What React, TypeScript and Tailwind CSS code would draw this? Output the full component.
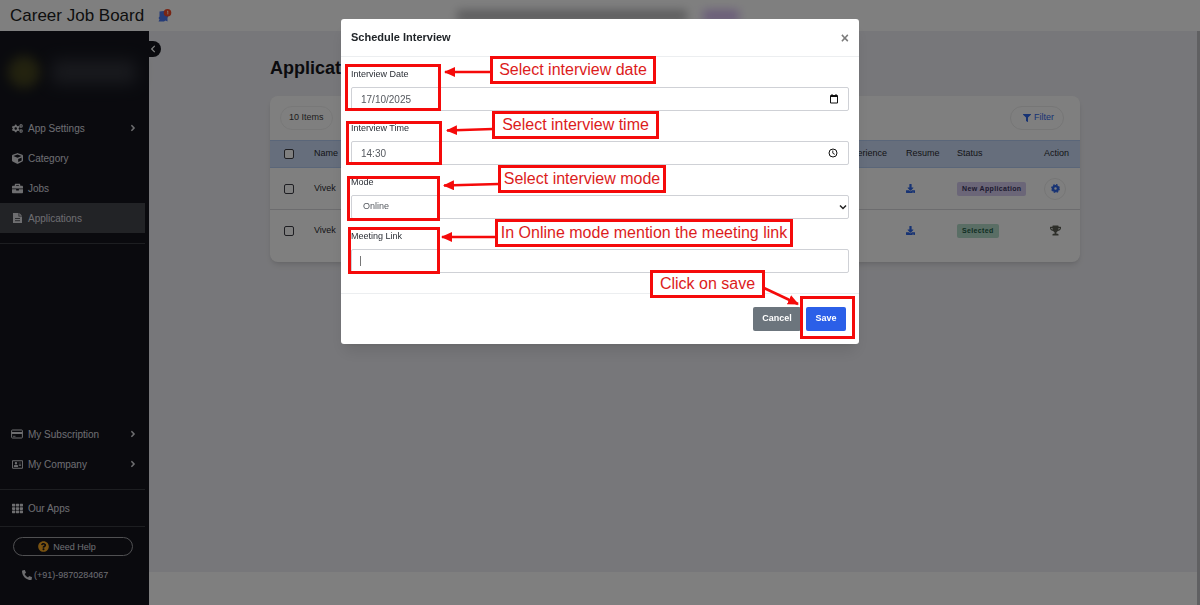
import { useState } from "react";
import type { ReactNode } from "react";
import {
  FaAngleRight,
  FaBriefcase,
  FaChevronLeft,
  FaCogs,
  FaCube,
  FaDownload,
  FaFilter,
  FaPhoneAlt,
  FaQuestionCircle,
  FaRegAddressCard,
  FaTh,
  FaTrophy,
} from "react-icons/fa";

interface NavItemProps {
  icon: ReactNode;
  label: string;
  active?: boolean;
  expandable?: boolean;
}

function NavItem({ icon, label, active, expandable }: NavItemProps) {
  return (
    <a
      href="#"
      className={`mr-1 flex h-[30px] items-center gap-[5px] pl-[11px] pr-[7px] text-[10px] ${
        active ? "bg-[#45464c]" : ""
      }`}
    >
      <span className="flex w-3 justify-center text-[11px]">{icon}</span>
      <span className="flex-1">{label}</span>
      {expandable && <FaAngleRight className="text-[10px]" />}
    </a>
  );
}

function DocumentIcon() {
  return (
    <svg viewBox="0 0 11 12" className="h-3 w-[11px]">
      <path d="M1 1h5.500v3.500H10V11H1z M7.300 1 10 3.700H7.300z" fill="currentColor" />
      <path d="M3 6.500h5 M3 8.700h5" stroke="#45464c" strokeWidth=".9" />
    </svg>
  );
}

function CardIcon() {
  return (
    <svg viewBox="0 0 12 10" className="h-[10px] w-3">
      <rect x=".6" y="1" width="10.800" height="8" rx=".8" fill="none" stroke="currentColor" />
      <path d="M.6 3h10.800v2H.6z" fill="currentColor" />
      <path d="M2 7.300h2.500" stroke="currentColor" strokeWidth=".8" />
    </svg>
  );
}

function Sidebar() {
  return (
    <aside className="relative flex w-[149px] shrink-0 flex-col bg-[#14151d] pb-[23px] text-[#dcdce0]">
      <button
        type="button"
        aria-label="Collapse sidebar"
        className="absolute left-full top-[10px] flex h-4 w-3 items-center justify-center rounded-r-lg bg-[#14151d] pr-1 text-[8px] text-white"
      >
        <FaChevronLeft />
      </button>
      <div className="flex h-[82px] items-center gap-3 pl-2">
        <span className="size-8 rounded-full bg-[#5c5a20] opacity-70 blur-[6px]" />
        <span className="h-6 w-[84px] rounded bg-[#3a3c44] opacity-80 blur-[8px]" />
      </div>
      <nav className="flex flex-1 flex-col">
        <NavItem icon={<FaCogs />} label="App Settings" expandable />
        <NavItem icon={<FaCube />} label="Category" />
        <NavItem icon={<FaBriefcase />} label="Jobs" />
        <NavItem icon={<DocumentIcon />} label="Applications" active />
        <hr className="mr-1 mt-[10px] border-[#3a3c43]" />
        <div className="mt-auto">
          <NavItem icon={<CardIcon />} label="My Subscription" expandable />
          <NavItem icon={<FaRegAddressCard />} label="My Company" expandable />
        </div>
        <hr className="mr-1 mt-[10px] border-[#3a3c43]" />
        <div className="py-[3px]">
          <NavItem icon={<FaTh />} label="Our Apps" />
        </div>
        <hr className="mr-1 border-[#3a3c43]" />
      </nav>
      <div className="flex flex-col gap-3 pl-[13px] pr-4 pt-[10px] text-[9px] leading-[14px]">
        <button
          type="button"
          className="flex h-[19px] items-center justify-center gap-1 rounded-full border border-[#a0a0a4] pr-3"
        >
          <FaQuestionCircle className="text-[11px] text-[#f5a623]" />
          Need Help
        </button>
        <a href="tel:+919870284067" className="flex items-center gap-0.5 pl-[9px]">
          <FaPhoneAlt className="text-[10px]" />
          (+91)-9870284067
        </a>
      </div>
    </aside>
  );
}

function TopBar() {
  return (
    <header className="flex h-[31px] shrink-0 items-center bg-white pl-[10px]">
      <span className="text-[17px] text-[#1c1c20]">Career Job Board</span>
      <button type="button" aria-label="Notifications" className="ml-3">
        <svg viewBox="0 0 16 16" className="size-4">
          <path
            d="M3.500 3.500 8 3l4.500 4.500-1 2.500v3.500l-2-1-1.500 1H2.500l1-2-1-1.500 1-1.500z"
            fill="#4a78f0"
          />
          <circle cx="11.500" cy="4.700" r="3.800" fill="#f04a28" />
          <path d="M11 3.500l.8-.5v3.400" stroke="#fff" strokeWidth=".8" fill="none" />
        </svg>
      </button>
      <div className="flex flex-1 items-center justify-center gap-4 pr-44">
        <span className="h-3 w-[230px] bg-[#77777c] opacity-50 blur-[5px]" />
        <span className="h-3 w-9 bg-[#c9a6f0] opacity-80 blur-[5px]" />
      </div>
    </header>
  );
}

interface Application {
  id: number;
  name: string;
  experience: string;
  status: string;
  statusClass: string;
  action: ReactNode;
}

const applications: Application[] = [
  {
    id: 1,
    name: "Vivek",
    experience: "",
    status: "New Application",
    statusClass: "bg-[#d6cdf0] text-[#3b3560]",
    action: (
      <button
        type="button"
        aria-label="Manage application"
        className="flex size-[22px] items-center justify-center rounded-full border border-[#ececec] text-[#2f66e8]"
      >
        <svg viewBox="0 0 10 10" className="size-[9px]">
          <circle cx="5" cy="5" r="2.700" fill="none" stroke="currentColor" strokeWidth="2.600" />
          <circle
            cx="5"
            cy="5"
            r="4.200"
            fill="none"
            stroke="currentColor"
            strokeWidth="1.400"
            strokeDasharray="1.900 1.400"
          />
        </svg>
      </button>
    ),
  },
  {
    id: 2,
    name: "Vivek",
    experience: "",
    status: "Selected",
    statusClass: "bg-[#b4dccb] text-[#1d5a44]",
    action: (
      <span className="flex w-[22px] justify-center text-[11px] text-[#5c5f55]">
        <FaTrophy />
      </span>
    ),
  },
];

const tickBox =
  "block size-[10px] appearance-none rounded-[2px] border border-[#3c3c44] bg-white";

function ApplicationsTable() {
  return (
    <section className="rounded-lg bg-white pb-[10px] shadow-md">
      <div className="flex h-11 items-center justify-between pl-[10px] pr-4 text-[9px]">
        <button
          type="button"
          className="h-6 rounded-full border border-[#f0f0f0] px-2 text-[#3c3c40]"
        >
          10 Items
        </button>
        <button
          type="button"
          className="flex h-6 items-center gap-[3px] rounded-full border border-[#ececec] pl-3 pr-[9px] text-[#2f66e8]"
        >
          <FaFilter className="text-[8px]" />
          Filter
        </button>
      </div>
      <table className="w-full table-fixed text-left text-[9px] text-[#2a2a30]">
        <colgroup>
          <col className="w-11" />
          <col />
          <col className="w-16" />
          <col className="w-[51px]" />
          <col className="w-[87px]" />
          <col className="w-9" />
        </colgroup>
        <thead>
          <tr className="h-[27px] border-y border-[#b4cdf2] bg-[#ccdcf8]">
            <th className="pl-[14px]">
              <input type="checkbox" aria-label="Select all" className={tickBox} />
            </th>
            <th className="font-normal">Name</th>
            <th className="font-normal">Experience</th>
            <th className="font-normal">Resume</th>
            <th className="font-normal">Status</th>
            <th className="font-normal">Action</th>
          </tr>
        </thead>
        <tbody>
          {applications.map((item) => (
            <tr key={item.id} className="h-[42px] border-b border-[#d8d8dc] last:border-0">
              <td className="pl-[14px]">
                <input
                  type="checkbox"
                  aria-label={`Select ${item.name}`}
                  className={tickBox}
                />
              </td>
              <td>{item.name}</td>
              <td>{item.experience}</td>
              <td>
                <a href="#" aria-label="Download resume" className="text-[#2f66e8]">
                  <FaDownload />
                </a>
              </td>
              <td>
                <span
                  className={`inline-block rounded-[2px] px-[5px] text-[7px] leading-[14px] font-bold tracking-wider ${item.statusClass}`}
                >
                  {item.status}
                </span>
              </td>
              <td>{item.action}</td>
            </tr>
          ))}
        </tbody>
      </table>
    </section>
  );
}

const control =
  "h-6 w-full rounded-[2px] border border-[#cfd1d6] bg-white text-[#55595f] outline-none";
const fieldLabel = "mb-1.5 block text-[9px] leading-[14px] text-[#2b2f36]";

function ScheduleDialog() {
  const [date, setDate] = useState("17/10/2025");
  const [time, setTime] = useState("14:30");
  const [mode, setMode] = useState("Online");
  const [link, setLink] = useState("");

  return (
    <div
      role="dialog"
      aria-labelledby="schedule-title"
      className="relative w-full max-w-[518px] rounded-[3px] bg-white shadow-lg"
    >
      <div className="flex h-[38px] items-center justify-between border-b border-[#eceef0] px-[10px]">
        <h2 id="schedule-title" className="text-[11px] font-bold text-[#212529]">
          Schedule Interview
        </h2>
        <button
          type="button"
          aria-label="Close"
          className="text-sm leading-none font-bold text-[#7c7c7c]"
        >
          ×
        </button>
      </div>

      <div className="flex flex-col gap-[10px] px-[10px] pb-5 pt-[10px]">
        <div>
          <label htmlFor="date" className={fieldLabel}>
            Interview Date
          </label>
          <div className="relative">
            <input
              id="date"
              value={date}
              onChange={(e) => setDate(e.target.value)}
              className={`${control} block px-[9px] text-[10px]`}
            />
            <svg viewBox="0 0 10 10" className="absolute right-[10px] top-[7px] size-[10px]">
              <path
                d="M1.500 1.500h7v7.500h-7z M1.500 2.500h7 M3 0v2 M7 0v2"
                stroke="#111"
                fill="none"
              />
            </svg>
          </div>
        </div>
        <div>
          <label htmlFor="time" className={fieldLabel}>
            Interview Time
          </label>
          <div className="relative">
            <input
              id="time"
              value={time}
              onChange={(e) => setTime(e.target.value)}
              className={`${control} block px-[9px] text-[10px]`}
            />
            <svg viewBox="0 0 10 10" className="absolute right-[11px] top-[7px] size-[10px]">
              <circle cx="5" cy="5" r="4" stroke="#111" fill="none" />
              <path d="M4.800 2.500V5.200L6.800 6.400" stroke="#111" strokeWidth=".9" fill="none" />
            </svg>
          </div>
        </div>
        <div>
          <label htmlFor="mode" className={fieldLabel}>
            Mode
          </label>
          <div className="relative">
            <select
              id="mode"
              value={mode}
              onChange={(e) => setMode(e.target.value)}
              className={`${control} block appearance-none px-[11px] text-[9px]`}
            >
              <option>Online</option>
              <option>Offline</option>
            </select>
            <svg viewBox="0 0 8 8" className="absolute right-[2px] top-2 size-2">
              <path d="M1 2.500 4 5.500l3-3" stroke="#222" strokeWidth="1.500" fill="none" />
            </svg>
          </div>
        </div>
        <div>
          <label htmlFor="link" className={fieldLabel}>
            Meeting Link
          </label>
          <div className={`${control} flex items-center px-2`}>
            <span className="h-[10px] w-px bg-[#777]" />
            <input
              id="link"
              value={link}
              onChange={(e) => setLink(e.target.value)}
              className="h-full flex-1 text-[9px] outline-none"
            />
          </div>
        </div>
      </div>

      <div className="flex justify-end gap-[5px] border-t border-[#eceef0] px-[13px] py-[13px] text-[9px] font-bold text-white">
        <button type="button" className="h-6 w-12 rounded-[2px] bg-[#6c757d]">
          Cancel
        </button>
        <button type="button" className="h-6 w-10 rounded-[2px] bg-[#2b5fe8]">
          Save
        </button>
      </div>

      <Annotations />
    </div>
  );
}

const note =
  "absolute flex items-center justify-center border-3 border-[#f50a0a] bg-white text-base leading-none whitespace-nowrap text-[#dc1c1c]";
const frame = "absolute border-3 border-[#f50a0a]";

// Guide marks drawn on top of the dialog, placed relative to its corner.
function Annotations() {
  return (
    <div className="pointer-events-none absolute inset-0">
      <div className={`${frame} left-1 top-[45px] h-[47px] w-24`} />
      <div className={`${frame} left-[5px] top-[102px] h-[44px] w-24`} />
      <div className={`${frame} left-[6px] top-[157px] h-[45px] w-[93px]`} />
      <div className={`${frame} left-[7px] top-[208px] h-[47px] w-[92px]`} />
      <div className={`${frame} left-[459px] top-[277px] h-[43px] w-[55px]`} />

      <svg className="absolute inset-0 size-full overflow-visible">
        <defs>
          <marker
            id="head"
            viewBox="0 0 11 10"
            refX="10"
            refY="5"
            markerWidth="11"
            markerHeight="10"
            markerUnits="userSpaceOnUse"
            orient="auto"
          >
            <path d="M0 0 11 5 0 10z" fill="#f50a0a" />
          </marker>
        </defs>
        <g stroke="#f50a0a" strokeWidth="2.500">
          <path d="M150 53H104" markerEnd="url(#head)" />
          <path d="M152 110 106 111.500" markerEnd="url(#head)" />
          <path d="M158 165 103 166.500" markerEnd="url(#head)" />
          <path d="M155 218H101" markerEnd="url(#head)" />
          <path d="M423 269 457 285" markerEnd="url(#head)" />
        </g>
      </svg>

      <div className={`${note} left-[149px] top-[37px] h-7 w-[166px]`}>Select interview date</div>
      <div className={`${note} left-[151px] top-[92px] h-7 w-[167px]`}>Select interview time</div>
      <div className={`${note} left-[157px] top-[146px] h-7 w-[168px]`}>Select interview mode</div>
      <div className={`${note} left-[154px] top-[200px] h-7 w-[298px]`}>
        In Online mode mention the meeting link
      </div>
      <div className={`${note} left-[309px] top-[251px] h-7 w-[115px]`}>Click on save</div>
    </div>
  );
}

export default function App() {
  return (
    <div className="flex min-h-screen flex-col font-['Liberation_Sans',Arial,sans-serif]">
      <TopBar />
      <div className="flex flex-1">
        <Sidebar />
        <div className="flex flex-1 flex-col border-r-3 border-[#c0c0c4]">
          <main className="flex-1 bg-[#efeff4] pl-[121px] pr-[117px] pt-[23px]">
            <h1 className="mb-[14px] text-lg font-bold text-[#16161c]">Applications</h1>
            <ApplicationsTable />
          </main>
          <footer className="h-[33px] bg-white" />
        </div>
      </div>
      <div className="fixed inset-0 flex items-start justify-center bg-black/50 pt-[19px]">
        <ScheduleDialog />
      </div>
    </div>
  );
}
